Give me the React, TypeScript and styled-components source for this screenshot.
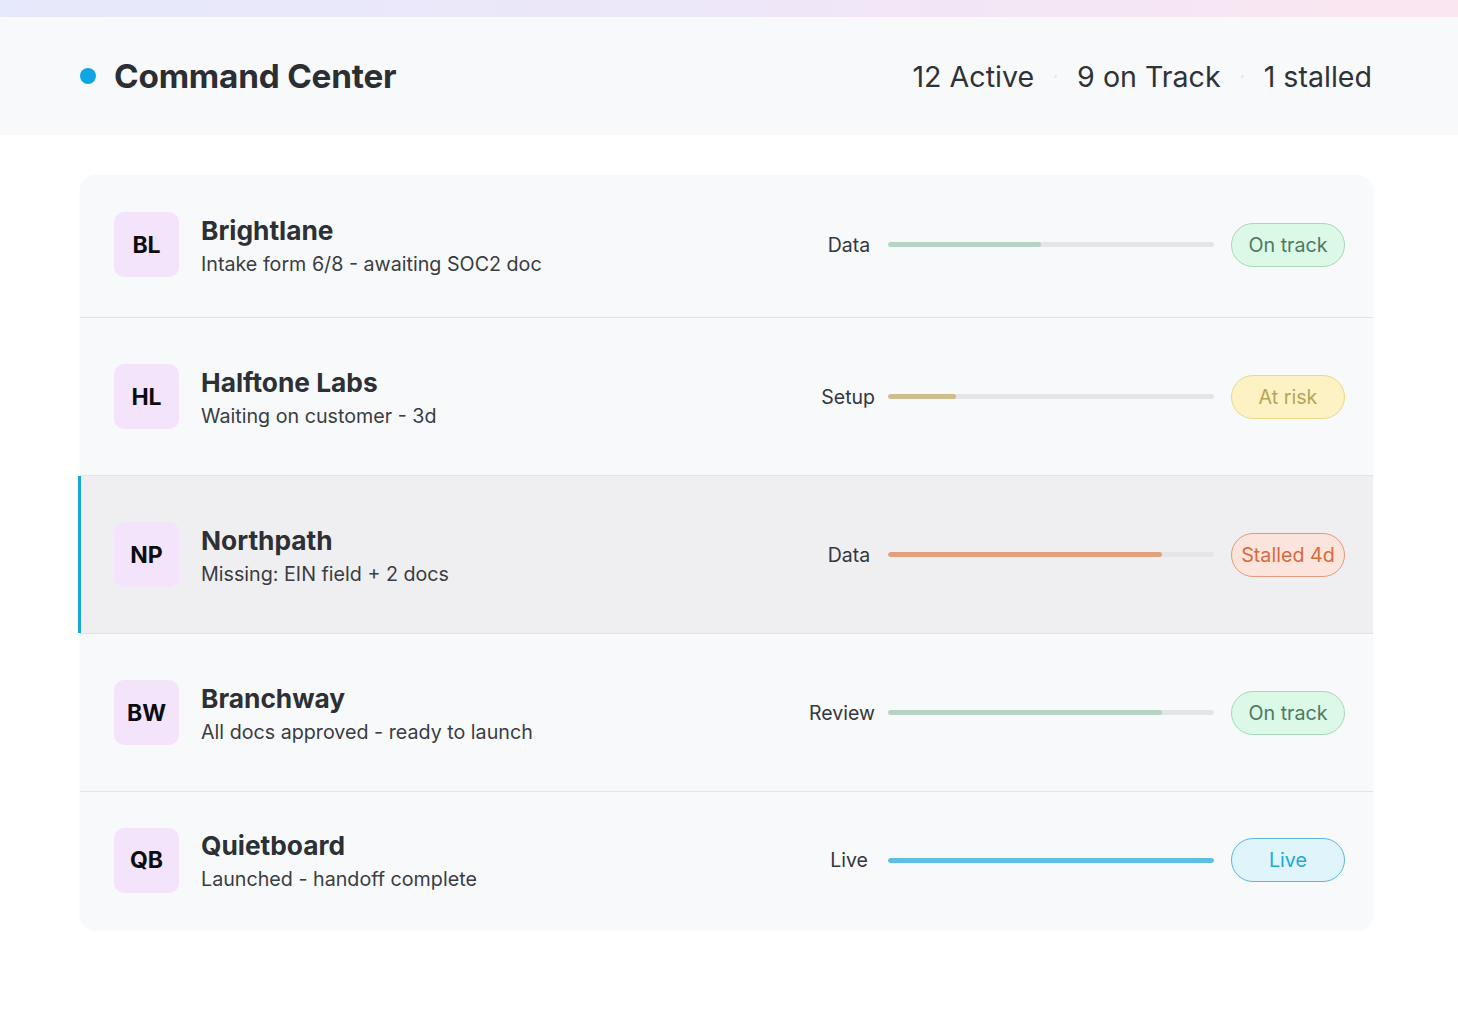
import React from "react"
import styled, { createGlobalStyle } from "styled-components"

type Status = "ok" | "risk" | "stalled" | "live"

type Account = {
  initials: string
  name: string
  note: string
  stage: string
  progress: number
  status: Status
  label: string
  selected?: boolean
}

const accounts: Account[] = [
  { initials: "BL", name: "Brightlane", note: "Intake form 6/8 - awaiting SOC2 doc", stage: "Data", progress: 47, status: "ok", label: "On track" },
  { initials: "HL", name: "Halftone Labs", note: "Waiting on customer - 3d", stage: "Setup", progress: 21, status: "risk", label: "At risk" },
  { initials: "NP", name: "Northpath", note: "Missing: EIN field + 2 docs", stage: "Data", progress: 84, status: "stalled", label: "Stalled 4d", selected: true },
  { initials: "BW", name: "Branchway", note: "All docs approved - ready to launch", stage: "Review", progress: 84, status: "ok", label: "On track" },
  { initials: "QB", name: "Quietboard", note: "Launched - handoff complete", stage: "Live", progress: 100, status: "live", label: "Live" },
]

const palette: Record<Status, { bar: string; bg: string; border: string; text: string }> = {
  ok: { bar: "#b6d4c4", bg: "#dcf8e6", border: "#a9d8b9", text: "#4e7a5f" },
  risk: { bar: "#cdbc8c", bg: "#fcf2c4", border: "#e9d98c", text: "#b6a457" },
  stalled: { bar: "#e2a17f", bg: "#fbe4dc", border: "#e09a7c", text: "#d86a40" },
  live: { bar: "#5cc0e2", bg: "#e0f4fc", border: "#5cb9da", text: "#1ea8d8" },
}

const App = () => {
  return (
    <>
      <GlobalStyle />
      <Page>
        <TopStrip />
        <Header>
          <Title>
            <Dot />
            Command Center
          </Title>
          <Stats>
            <span>12 Active</span>
            <Sep />
            <span>9 on Track</span>
            <Sep />
            <span>1 stalled</span>
          </Stats>
        </Header>
        <Card>
          {accounts.map((a) => (
            <Row key={a.initials} $selected={a.selected}>
              <Left>
                <Avatar>{a.initials}</Avatar>
                <Info>
                  <Name>{a.name}</Name>
                  <Note>{a.note}</Note>
                </Info>
              </Left>
              <Right>
                <Stage>{a.stage}</Stage>
                <Track>
                  <Fill $color={palette[a.status].bar} style={{ width: `${a.progress}%` }} />
                </Track>
                <Pill $status={a.status}>{a.label}</Pill>
              </Right>
            </Row>
          ))}
        </Card>
      </Page>
    </>
  )
}

export default App

const GlobalStyle = createGlobalStyle`
  body {
    margin: 0;
    background: #ffffff;
    font-family: Inter, "Noto Sans", sans-serif;
    color: #2e3136;
  }
`

const Page = styled.div`
  display: flex;
  flex-direction: column;
  min-height: 1034px;
`

const TopStrip = styled.div`
  height: 17px;
  background: linear-gradient(90deg, #e6e9fb 0%, #ece7f9 45%, #f6e6f4 80%, #fbe6f0 100%);
`

const Header = styled.header`
  height: 118px;
  background: #f8f9fb;
  display: flex;
  align-items: center;
  justify-content: space-between;
  padding: 0 86px 0 80px;
`

const Title = styled.h1`
  margin: 0;
  display: flex;
  align-items: center;
  gap: 18px;
  font-size: 33.3px;
  font-weight: 700;
  color: #2b2e33;
  letter-spacing: -0.2px;
`

const Dot = styled.span`
  width: 16px;
  height: 16px;
  border-radius: 50%;
  background: #0ea7e3;
`

const Stats = styled.div`
  display: flex;
  align-items: center;
  gap: 20px;
  font-size: 28.6px;
  color: #2f3237;
`

const Sep = styled.span`
  width: 3px;
  height: 3px;
  border-radius: 50%;
  background: #e6e8ec;
`

const Card = styled.div`
  margin: 40px 85px 0 80px;
  background: #f8f9fb;
  border-radius: 16px;
  box-shadow: 0 1px 3px rgba(20, 30, 50, 0.03);
`

const Row = styled.div<{ $selected?: boolean }>`
  position: relative;
  box-sizing: border-box;
  height: 158px;
  display: flex;
  align-items: center;
  justify-content: space-between;
  padding: 0 28px 0 34px;
  border-bottom: 1px solid #e2e3e7;
  background: ${(p) => (p.$selected ? "#efeff2" : "transparent")};

  &:first-child {
    height: 143px;
    padding-bottom: 3px;
  }
  &:last-child {
    height: 138px;
    padding-bottom: 2px;
    border-bottom: none;
  }

  ${(p) =>
    p.$selected &&
    `
    &::before {
      content: "";
      position: absolute;
      left: -2px;
      top: 0;
      bottom: 0;
      width: 3px;
      background: #17a6d8;
    }
  `}
`

const Left = styled.div`
  display: flex;
  align-items: center;
  gap: 22px;
`

const Avatar = styled.div`
  width: 65px;
  height: 65px;
  border-radius: 10px;
  background: #f3e3fb;
  display: flex;
  align-items: center;
  justify-content: center;
  font-size: 23px;
  font-weight: 700;
  color: #0c0d10;
`

const Info = styled.div`
  display: flex;
  flex-direction: column;
  gap: 3px;
  margin-top: 1px;
`

const Name = styled.div`
  font-size: 26.3px;
  font-weight: 700;
  color: #2d3035;
  line-height: 34px;
`

const Note = styled.div`
  font-size: 19.7px;
  color: #3a3d42;
  line-height: 26px;
`

const Right = styled.div`
  display: flex;
  align-items: center;
`

const Stage = styled.div`
  min-width: 52px;
  text-align: center;
  font-size: 19.5px;
  color: #33363b;
  margin-right: 13px;
`

const Track = styled.div`
  width: 326px;
  height: 5px;
  border-radius: 3px;
  background: #e4e5e9;
  overflow: hidden;
  margin-right: 17px;
`

const Fill = styled.div<{ $color: string }>`
  height: 100%;
  border-radius: 3px;
  background: ${(p) => p.$color};
`

const Pill = styled.div<{ $status: Status }>`
  width: 114px;
  height: 44px;
  box-sizing: border-box;
  border-radius: 22px;
  display: flex;
  align-items: center;
  justify-content: center;
  font-size: 19.7px;
  background: ${(p) => palette[p.$status].bg};
  border: 1px solid ${(p) => palette[p.$status].border};
  color: ${(p) => palette[p.$status].text};
`
